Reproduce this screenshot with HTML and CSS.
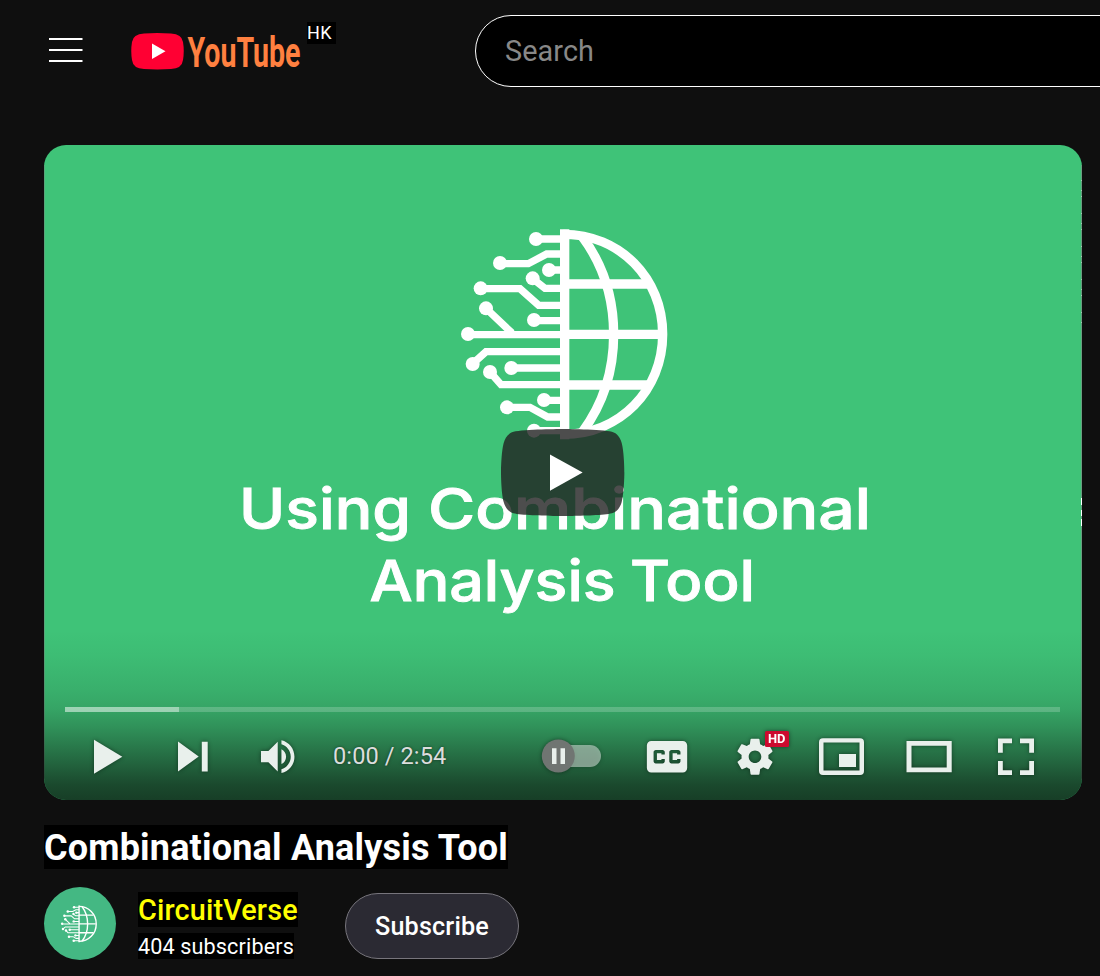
FILE: index.html
```html
<!DOCTYPE html>
<html lang="en">
<head>
<meta charset="utf-8">
<title>Combinational Analysis Tool - YouTube</title>
<link rel="stylesheet" href="styles.css">
</head>
<body>
<svg class="defs" width="0" height="0" aria-hidden="true">
  <symbol id="globe" viewBox="0 0 720 720">
    <g class="globe-lines">
      <path d="M344 43V673"/>
      <path d="M340 58C510 58 638 190 638 358S510 658 340 658"/>
      <path d="M397 65C460 150 491 250 491 358S460 566 397 651"/>
      <path d="M344 207H592M344 358H630M344 510H592"/>
    </g>
    <g class="globe-traces">
      <path d="M258 72H344M149 146H235L290 117H344M297 165H344M247 190L285 220H344M92 221H210L266 271H344M108 280L186 354M252 317H344M53 359H344M67 447L108 410H344M184 459H344M120 471L153 509H344M171 577H240L293 606H344M282 556H344M250 647H344"/>
    </g>
    <g fill="#fff">
      <circle cx="258" cy="72" r="21"/><circle cx="150" cy="144" r="21"/><circle cx="297" cy="165" r="21"/><circle cx="248" cy="190" r="21"/><circle cx="92" cy="220" r="21"/><circle cx="108" cy="280" r="21"/><circle cx="252" cy="315" r="21"/><circle cx="54" cy="357" r="21"/><circle cx="68" cy="447" r="21"/><circle cx="184" cy="459" r="21"/><circle cx="120" cy="471" r="21"/><circle cx="171" cy="577" r="21"/><circle cx="282" cy="555" r="21"/><circle cx="252" cy="647" r="21"/>
    </g>
  </symbol>
</svg>

<header class="masthead">
  <svg class="menu" viewBox="0 0 34 26"><path d="M0 2H33.500M0 13H33.500M0 24H33.500"/></svg>
  <div class="brand">
    <svg class="brand-logo" viewBox="131 16 172 70">
      <path fill="#ff0033" d="M144 33.500Q157 32.500 171 33.500Q182 34 183 42Q184.500 51 183 60Q182 68.500 171 69Q157 69.800 144 69Q133 68.500 132 60Q130.500 51 132 42Q133 34 144 33.500Z"/>
      <path fill="#fff" d="M152 43.500V59L165.500 51.300Z"/>
      <text class="brand-word" transform="translate(187.500 67.300) scale(1 1.520)" textLength="113" lengthAdjust="spacingAndGlyphs">YouTube</text>
    </svg>
    <span class="country">HK</span>
  </div>
  <div class="search"><span>Search</span></div>
</header>

<main class="watch">
  <section class="player">
    <svg class="frame" viewBox="44 145 1038 655">
      <use href="#globe" x="450" y="215" width="240" height="240"/>
      <g class="slide-text">
        <text x="239" y="528.500" textLength="172" lengthAdjust="spacingAndGlyphs">Using</text>
        <text x="428" y="528.500" textLength="443" lengthAdjust="spacingAndGlyphs">Combinational</text>
        <text x="369.500" y="600.500" textLength="246" lengthAdjust="spacingAndGlyphs">Analysis</text>
        <text x="630" y="600.500" textLength="125" lengthAdjust="spacingAndGlyphs">Tool</text>
      </g>
      <g class="edge">
        <path d="M1081.500 165V780" stroke="#6b9c80"/>
        <path d="M44.500 165V780" stroke="#58a67a"/>
        <path stroke="#a9c9b6" stroke-dasharray="1 9 1 5 1 16" d="M1081.500 180V325"/>
        <path stroke="#fff" d="M1081.500 498V505M1081.500 510V516M1081.500 519V526"/>
      </g>
    </svg>
    <svg class="big-play" viewBox="0 0 68 48">
      <path fill="#212121" fill-opacity=".8" d="M66.520 7.740c-.78-2.930-2.490-5.410-5.420-6.190C55.790.13 34 0 34 0S12.210.13 6.900 1.550C3.970 2.330 2.270 4.810 1.480 7.740.06 13.050 0 24 0 24s.06 10.950 1.480 16.260c.78 2.930 2.490 5.410 5.420 6.190C12.210 47.870 34 48 34 48s21.790-.13 27.100-1.550c2.930-.78 4.640-3.260 5.420-6.190C67.940 34.950 68 24 68 24s-.06-10.950-1.480-16.260z"/>
      <path fill="#fff" d="M45 24 27 14v20"/>
    </svg>
    <div class="chrome">
      <div class="progress"><div class="loaded"></div></div>
      <div class="controls">
        <svg class="ctl" width="85" viewBox="65 726 85 60"><path d="M94 739.700 122.300 756.700 94 773.700Z"/></svg>
        <svg class="ctl" width="85" viewBox="150 726 85 60"><path d="M178 741.500 198.700 756.500 178 771.600ZM201.800 741.800H207.700V771.600H201.800Z"/></svg>
        <svg class="ctl" width="98" viewBox="235 726 98 60"><path transform="translate(246.100 723.200) scale(1.860)" d="M8 21h4l5 5V10l-5 5H8zM19 14v8c1.480-.68 2.500-2.230 2.500-4 0-1.740-1.020-3.260-2.500-4zM19 11.290c2.890.86 5 3.540 5 6.710s-2.110 5.850-5 6.710v2.060c4.010-.91 7-4.490 7-8.770s-2.990-7.860-7-8.770z"/></svg>
        <span class="time">0:00 / 2:54</span>
        <div class="right">
          <svg class="ctl" width="95" viewBox="528 726 95 60"><rect x="550" y="745" width="51" height="22" rx="11" fill-opacity=".5"/><circle cx="558.300" cy="756" r="16.500" fill="#707572"/><path d="M552 748.300h4.500V764H552zM560.500 748.300h4.500V764h-4.500z"/></svg>
          <svg class="ctl" width="88" viewBox="623 726 88 60"><path fill-rule="evenodd" transform="translate(626.700 716.400) scale(2.240)" d="M11 11c-1.110 0-2 .9-2 2v10c0 1.100.89 2 2 2h14c1.100 0 2-.9 2-2V13c0-1.100-.9-2-2-2zM17 17h-1.500v-.5h-2v3h2V19H17v1c0 .55-.45 1-1 1h-3c-.55 0-1-.45-1-1v-4c0-.55.45-1 1-1h3c.55 0 1 .45 1 1zM24 17h-1.500v-.5h-2v3h2V19H24v1c0 .55-.45 1-1 1h-3c-.55 0-1-.45-1-1v-4c0-.55.45-1 1-1h3c.55 0 1 .45 1 1z"/></svg>
          <svg class="ctl" width="87" viewBox="711 726 87 60"><path transform="translate(714.500 716.200) scale(2.250)" d="m23.940 18.780c.03-.25.05-.51.05-.78 0-.27-.02-.52-.05-.78l1.680-1.320c.15-.12.19-.33.09-.51l-1.600-2.760c-.09-.17-.31-.24-.48-.17l-1.990.8c-.41-.32-.86-.58-1.350-.78l-.3-2.120c-.02-.19-.19-.33-.39-.33h-3.200c-.2 0-.36.14-.39.33l-.3 2.120c-.48.2-.93.47-1.350.78l-1.990-.8c-.18-.07-.39 0-.48.17l-1.600 2.760c-.1.17-.05.39.09.51l1.680 1.320c-.03.25-.05.52-.05.78 0 .26.02.52.05.78l-1.680 1.320c-.15.12-.19.33-.09.51l1.600 2.760c.09.17.31.24.48.17l1.990-.8c.41.32.86.58 1.350.78l.3 2.120c.02.19.19.33.39.33h3.200c.2 0 .36-.14.39-.33l.3-2.120c.48-.2.93-.47 1.350-.78l1.990.8c.18.07.39 0 .48-.17l1.600-2.760c.09-.17.05-.39-.09-.51zm-5.940 2.010c-1.540 0-2.800-1.250-2.800-2.800 0-1.540 1.250-2.800 2.800-2.800 1.540 0 2.800 1.250 2.800 2.800 0 1.540-1.250 2.800-2.800 2.800z"/><rect x="765" y="731" width="24" height="16" rx="1.500" fill="#cc0a2f"/><text class="hd" x="768" y="743.200" textLength="17.500" lengthAdjust="spacingAndGlyphs">HD</text></svg>
          <svg class="ctl" width="87" viewBox="798 726 87 60"><path fill-rule="evenodd" d="M823 738.300H860Q864 738.300 864 742.300V771Q864 775 860 775H823Q819 775 819 771V742.300Q819 738.300 823 738.300ZM823.500 742.600V770.400H859.500V742.600ZM839 754H856V767H839Z"/></svg>
          <svg class="ctl" width="87" viewBox="885 726 87 60"><path fill-rule="evenodd" d="M906.500 741H951.700V772.300H906.500ZM911.500 745.800V767.500H946.700V745.800Z"/></svg>
          <svg class="ctl" width="88" viewBox="972 726 88 60"><path d="M998 738.500H1012V743.300H1002.800V752.700H998ZM1020 738.500H1034V752.700H1029.200V743.300H1020ZM998 761H1002.800V770.200H1012V775H998ZM1029.200 761H1034V775H1020V770.200H1029.200Z"/></svg>
        </div>
      </div>
    </div>
  </section>

  <h1 class="title"><span>Combinational Analysis Tool</span></h1>
  <div class="owner">
    <div class="avatar"><svg viewBox="0 0 720 720"><use href="#globe"/></svg></div>
    <div class="channel">
      <span class="name">CircuitVerse</span>
      <span class="subs">404 subscribers</span>
    </div>
    <button class="subscribe">Subscribe</button>
  </div>
</main>
</body>
</html>
```
FILE: styles.css
```css
* { box-sizing: border-box; }
body {
  margin: 0;
  height: 976px;
  overflow: hidden;
  background: #0f0f0f;
  color: #fff;
  font-family: Roboto, "Liberation Sans", sans-serif;
}
svg { display: block; }
.defs { position: absolute; }

.masthead {
  display: flex;
  align-items: flex-start;
  height: 145px;
  padding: 15px 0 0 49px;
  overflow: hidden;
}
.menu { width: 34px; height: 26px; margin-top: 22px; flex: none; }
.menu path { stroke: #fff; stroke-width: 2; }
.brand { display: flex; align-items: flex-start; width: 344px; margin-left: 48px; flex: none; }
.brand-logo { width: 172px; height: 70px; margin-top: 1px; }
.brand-word { fill: #ff8040; font-family: Roboto, sans-serif; font-size: 28px; font-weight: 700; }
.country {
  margin: 7px 0 0 4px;
  padding: 0 4px 0 0;
  background: #000;
  font-size: 18px;
  letter-spacing: .3px;
  line-height: 22px;
}
.search {
  flex: none;
  display: flex;
  align-items: center;
  width: 900px;
  height: 72px;
  padding-left: 29px;
  border: 1px solid #fff;
  border-radius: 36px;
  background: #000;
  color: #888;
  font-size: 28.8px;
  letter-spacing: .1px;
}

.watch { padding-left: 44px; }
.player {
  position: relative;
  width: 1038px;
  height: 655px;
  overflow: hidden;
  border-radius: 22px;
  background: #3fc378;
}
.frame { width: 1038px; height: 655px; }
.globe-lines { fill: none; stroke: #fff; stroke-width: var(--line, 28); }
.globe-traces { fill: none; stroke: #fff; stroke-width: var(--trace, 22); }
.slide-text { fill: #fff; font-family: Inter, sans-serif; font-size: 56px; font-weight: 500; stroke: #fff; stroke-width: .9; }
.edge { fill: none; stroke-width: 1; }
.big-play { position: absolute; left: 457.3px; top: 284px; width: 123.4px; height: 87.1px; }

.chrome {
  position: absolute;
  inset: auto 0 0;
  height: 170px;
  padding: 77px 22px 0 21px;
  background: linear-gradient(rgba(15, 35, 22, 0) 0, rgba(15, 35, 22, .04) 15%, rgba(15, 35, 22, .12) 35%, rgba(15, 35, 22, .19) 46%, rgba(15, 35, 22, .31) 57%, rgba(15, 35, 22, .56) 76%, rgba(15, 35, 22, .76) 91%, rgba(15, 35, 22, .83) 100%);
}
.progress { height: 5px; background: rgba(255, 255, 255, .2); }
.loaded { width: 114px; height: 5px; background: rgba(255, 255, 255, .4); }
.controls { display: flex; align-items: center; height: 60px; margin-top: 14px; }
.ctl { height: 60px; flex: none; fill: #e9f0ec; filter: drop-shadow(0 0 2px rgba(0, 0, 0, .45)); }
.time { color: #ddd; font-size: 23.6px; letter-spacing: .08px; white-space: nowrap; text-shadow: 0 0 3px rgba(0, 0, 0, .5); }
.right { display: flex; margin-left: auto; }
.hd { fill: #fff; font-size: 12.5px; font-weight: 700; }

.title { height: 44px; margin: 25px 0 0; font-size: 36px; font-weight: 700; letter-spacing: .19px; line-height: 44px; }
.title span { display: inline-block; height: 44px; padding-top: 1px; background: #000; }
.owner { display: flex; align-items: flex-start; margin-top: 18px; }
.avatar {
  display: grid;
  place-items: center;
  width: 72px;
  height: 73px;
  border-radius: 50%;
  background: #44b883;
}
.avatar svg { width: 42px; height: 42px; --line: 24; --trace: 18; }
.channel { display: flex; flex-direction: column; align-items: flex-start; width: 207px; margin: 5px 0 0 22px; }
.name { height: 35px; padding-top: 1px; background: #000; color: #ff0; font-size: 28.8px; font-weight: 500; letter-spacing: .16px; line-height: 35px; }
.subs { height: 26px; margin-top: 6px; padding-top: 1px; background: #000; font-size: 21.6px; letter-spacing: .13px; line-height: 26px; }
.subscribe {
  width: 174px;
  height: 66px;
  margin: 6px 0 0;
  padding: 0;
  border: 1px solid #77757c;
  border-radius: 33px;
  background: #2b2a33;
  color: #fff;
  font: 500 25.2px Roboto, sans-serif;
  letter-spacing: .15px;
}
```
